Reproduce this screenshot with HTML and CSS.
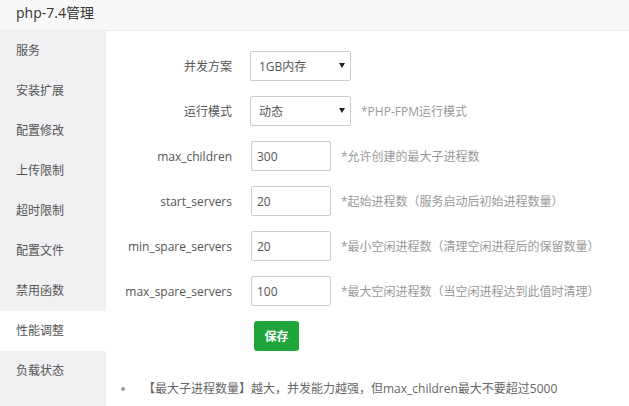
FILE: index.html
```html
<!DOCTYPE html>
<html lang="zh-CN">
<head>
<meta charset="utf-8">
<title>php-7.4管理</title>
<link rel="stylesheet" href="styles.css">
</head>
<body>
<div class="win">
  <div class="title">php-7.4管理</div>
  <div class="body">
    <ul class="side">
      <li>服务</li>
      <li>安装扩展</li>
      <li>配置修改</li>
      <li>上传限制</li>
      <li>超时限制</li>
      <li>配置文件</li>
      <li>禁用函数</li>
      <li class="on">性能调整</li>
      <li>负载状态</li>
    </ul>
    <div class="main">
      <div class="row">
        <span class="lbl">并发方案</span>
        <div class="sel"><select><option>1GB内存</option></select><i class="arr"></i></div>
      </div>
      <div class="row">
        <span class="lbl">运行模式</span>
        <div class="sel"><select><option>动态</option></select><i class="arr"></i></div>
        <span class="tip">*PHP-FPM运行模式</span>
      </div>
      <div class="row">
        <span class="lbl">max_children</span>
        <input class="inp" type="text" value="300">
        <span class="tip">*允许创建的最大子进程数</span>
      </div>
      <div class="row">
        <span class="lbl">start_servers</span>
        <input class="inp" type="text" value="20">
        <span class="tip">*起始进程数（服务启动后初始进程数量）</span>
      </div>
      <div class="row">
        <span class="lbl">min_spare_servers</span>
        <input class="inp" type="text" value="20">
        <span class="tip">*最小空闲进程数（清理空闲进程后的保留数量）</span>
      </div>
      <div class="row">
        <span class="lbl">max_spare_servers</span>
        <input class="inp" type="text" value="100">
        <span class="tip">*最大空闲进程数（当空闲进程达到此值时清理）</span>
      </div>
      <div class="row">
        <span class="lbl"></span>
        <button class="btn">保存</button>
      </div>
      <ul class="notes">
        <li>【最大子进程数量】越大，并发能力越强，但max_children最大不要超过5000</li>
      </ul>
    </div>
  </div>
</div>
</body>
</html>
```

FILE: styles.css
```css
* { box-sizing: border-box; }
html, body { margin: 0; padding: 0; height: 100%; }
body {
  font-family: "Open Sans", "Noto Sans CJK SC", sans-serif;
  font-size: 12px;
  color: #555;
  background: #fff;
  overflow: hidden;
}
.win { height: 100%; display: flex; flex-direction: column; }
.title {
  height: 31px;
  line-height: 25px;
  padding-left: 16px;
  font-size: 14px;
  color: #333;
  background: #f8f8f8;
  border-bottom: 1px solid #eee;
}
.body { flex: 1; display: flex; min-height: 0; }
.side {
  list-style: none;
  margin: 0;
  padding: 0;
  width: 106px;
  flex: none;
  background: #f0f0f2;
}
.side li {
  height: 40px;
  line-height: 40px;
  padding-left: 16px;
  color: #555;
}
.side li.on { background: #fff; }
.main { flex: 1; padding-top: 20px; }
.row {
  display: flex;
  align-items: center;
  height: 30px;
  margin-bottom: 15px;
}
.lbl {
  width: 126px;
  text-align: right;
  margin-right: 18px;
  flex: none;
}
.sel { position: relative; width: 101px; height: 30px; flex: none; }
.sel select {
  appearance: none;
  -webkit-appearance: none;
  width: 100%;
  height: 100%;
  border: 1px solid #ccc;
  border-radius: 2px;
  background: #fff;
  padding: 0 0 0 8px;
  font: inherit;
  color: #555;
  outline: none;
}
.arr {
  position: absolute;
  right: 6px;
  top: 12px;
  width: 0;
  height: 0;
  border-left: 3px solid transparent;
  border-right: 3px solid transparent;
  border-top: 5px solid #222;
}
.inp {
  width: 80px;
  height: 30px;
  border: 1px solid #ccc;
  border-radius: 2px;
  padding: 0 5px;
  font: inherit;
  color: #555;
  outline: none;
  margin-left: 1px;
}
.tip { margin-left: 10px; color: #999; }
.btn {
  margin-left: 4px;
  width: 45px;
  height: 30px;
  border: none;
  border-radius: 3px;
  background: #20a53a;
  color: #fff;
  font: inherit;
  font-weight: bold;
  padding: 0;
}
.notes {
  list-style: none;
  margin: 28px 0 0;
  padding: 0 0 0 15px;
  color: #666;
}
.notes li { line-height: 20px; display: flex; align-items: center; }
.notes li::before {
  content: "";
  width: 4px;
  height: 4px;
  border-radius: 50%;
  background: #999;
  margin-right: 18px;
  flex: none;
}
```
